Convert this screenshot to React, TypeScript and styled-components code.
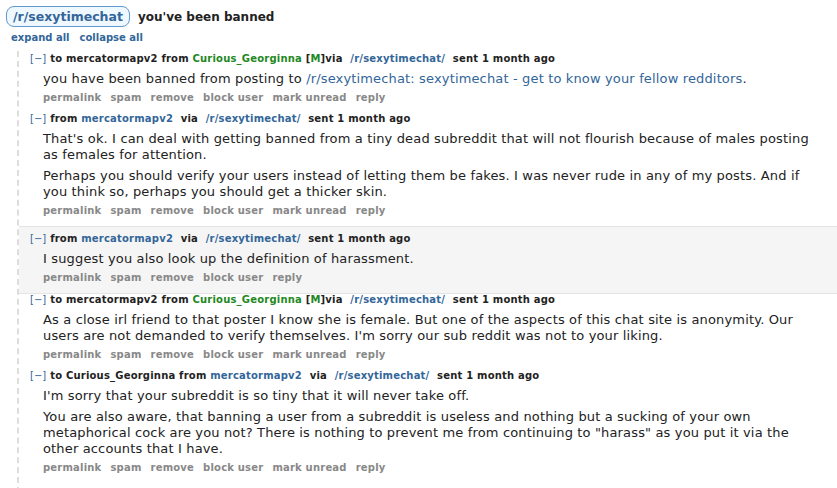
import React from "react";
import styled, { createGlobalStyle } from "styled-components";

const GlobalStyle = createGlobalStyle`
  html, body {
    margin: 0;
    padding: 0;
    background: #ffffff;
    font-family: "DejaVu Sans", Verdana, sans-serif;
    color: #222222;
  }
`;

const Page = styled.div`
  padding: 6px 0 0 6px;
`;

const TitleRow = styled.div`
  display: flex;
  align-items: center;
  gap: 8px;
`;

const SubPill = styled.span`
  display: inline-block;
  border: 1px solid #5f99cf;
  border-radius: 8px;
  background: #eff7ff;
  color: #336699;
  font-weight: bold;
  font-size: 12.5px;
  line-height: 19px;
  padding: 0 6px;
`;

const Subject = styled.span`
  font-weight: bold;
  font-size: 12px;
  color: #222;
`;

const ExpandRow = styled.div`
  display: flex;
  gap: 10px;
  padding: 5px 0 0 5px;
  font-size: 10px;
  font-weight: bold;
  line-height: 12px;
  color: #336699;
`;

const Thread = styled.div`
  margin: 7px 0 0 11px;
  border-left: 2px dashed #dddddd;
  padding-top: 2px;
  min-height: 440px;
`;

const Message = styled.div<{ $gray?: boolean }>`
  padding: ${(p) => (p.$gray ? "6px" : "0")} 0 9px 11px;
  background: ${(p) => (p.$gray ? "#f5f5f5" : "transparent")};
  border-top: ${(p) => (p.$gray ? "1px solid #e4e4e4" : "none")};
  border-bottom: ${(p) => (p.$gray ? "1px solid #e4e4e4" : "none")};
`;

const Header = styled.div`
  font-size: 10px;
  line-height: 12px;
  font-weight: bold;
  letter-spacing: 0.2px;
  color: #222;
  white-space: nowrap;
`;

const Toggle = styled.span`
  color: #336699;
  font-weight: normal;
  letter-spacing: 0;
  margin-right: 4px;
`;

const HeaderLink = styled.span<{ $green?: boolean }>`
  color: ${(p) => (p.$green ? "#228822" : "#336699")};
`;

const Sep = styled.span`
  margin-left: 4px;
`;

const Body = styled.div`
  margin: 6px 0 0 13px;
  font-size: 13px;
  line-height: 16px;
  letter-spacing: 0.15px;
  color: #222;
  max-width: 775px;
`;

const Para = styled.p`
  margin: 0 0 5px 0;
  &:last-child {
    margin-bottom: 0;
  }
`;

const BodyLink = styled.span`
  color: #336699;
`;

const Buttons = styled.div`
  display: flex;
  gap: 9px;
  margin: 5px 0 0 13px;
  font-size: 10px;
  line-height: 12px;
  font-weight: bold;
  letter-spacing: 0.2px;
  color: #888888;
`;

const toGeorginna = (
  <>
    to mercatormapv2 from <HeaderLink $green>Curious_Georginna</HeaderLink> [
    <HeaderLink $green>M</HeaderLink>]via{" "}
    <Sep />
    <HeaderLink>/r/sexytimechat/</HeaderLink>
    <Sep /> sent 1 month ago
  </>
);

const fromMercator = (
  <>
    from <HeaderLink>mercatormapv2</HeaderLink> <Sep />via <Sep />
    <HeaderLink>/r/sexytimechat/</HeaderLink>
    <Sep /> sent 1 month ago
  </>
);

const toCurious = (
  <>
    to Curious_Georginna from <HeaderLink>mercatormapv2</HeaderLink> <Sep />via{" "}
    <Sep />
    <HeaderLink>/r/sexytimechat/</HeaderLink>
    <Sep /> sent 1 month ago
  </>
);

const fullButtons = ["permalink", "spam", "remove", "block user", "mark unread", "reply"];
const shortButtons = ["permalink", "spam", "remove", "block user", "reply"];

type Msg = {
  header: React.ReactNode;
  paras: React.ReactNode[];
  buttons: string[];
  gray?: boolean;
};

const messages: Msg[] = [
  {
    header: toGeorginna,
    paras: [
      <>
        you have been banned from posting to{" "}
        <BodyLink>/r/sexytimechat: sexytimechat - get to know your fellow redditors</BodyLink>.
      </>,
    ],
    buttons: fullButtons,
  },
  {
    header: fromMercator,
    paras: [
      "That's ok. I can deal with getting banned from a tiny dead subreddit that will not flourish because of males posting as females for attention.",
      "Perhaps you should verify your users instead of letting them be fakes. I was never rude in any of my posts. And if you think so, perhaps you should get a thicker skin.",
    ],
    buttons: fullButtons,
  },
  {
    header: fromMercator,
    paras: ["I suggest you also look up the definition of harassment."],
    buttons: shortButtons,
    gray: true,
  },
  {
    header: toGeorginna,
    paras: [
      "As a close irl friend to that poster I know she is female. But one of the aspects of this chat site is anonymity. Our users are not demanded to verify themselves. I'm sorry our sub reddit was not to your liking.",
    ],
    buttons: fullButtons,
  },
  {
    header: toCurious,
    paras: [
      "I'm sorry that your subreddit is so tiny that it will never take off.",
      "You are also aware, that banning a user from a subreddit is useless and nothing but a sucking of your own metaphorical cock are you not? There is nothing to prevent me from continuing to \"harass\" as you put it via the other accounts that I have.",
    ],
    buttons: fullButtons,
  },
];

export default function App() {
  return (
    <>
      <GlobalStyle />
      <Page>
        <TitleRow>
          <SubPill>/r/sexytimechat</SubPill>
          <Subject>you've been banned</Subject>
        </TitleRow>
        <ExpandRow>
          <span>expand all</span>
          <span>collapse all</span>
        </ExpandRow>
        <Thread>
          {messages.map((m, i) => (
            <Message key={i} $gray={m.gray}>
              <Header>
                <Toggle>[−]</Toggle>
                {m.header}
              </Header>
              <Body>
                {m.paras.map((p, j) => (
                  <Para key={j}>{p}</Para>
                ))}
              </Body>
              <Buttons>
                {m.buttons.map((b) => (
                  <span key={b}>{b}</span>
                ))}
              </Buttons>
            </Message>
          ))}
        </Thread>
      </Page>
    </>
  );
}
